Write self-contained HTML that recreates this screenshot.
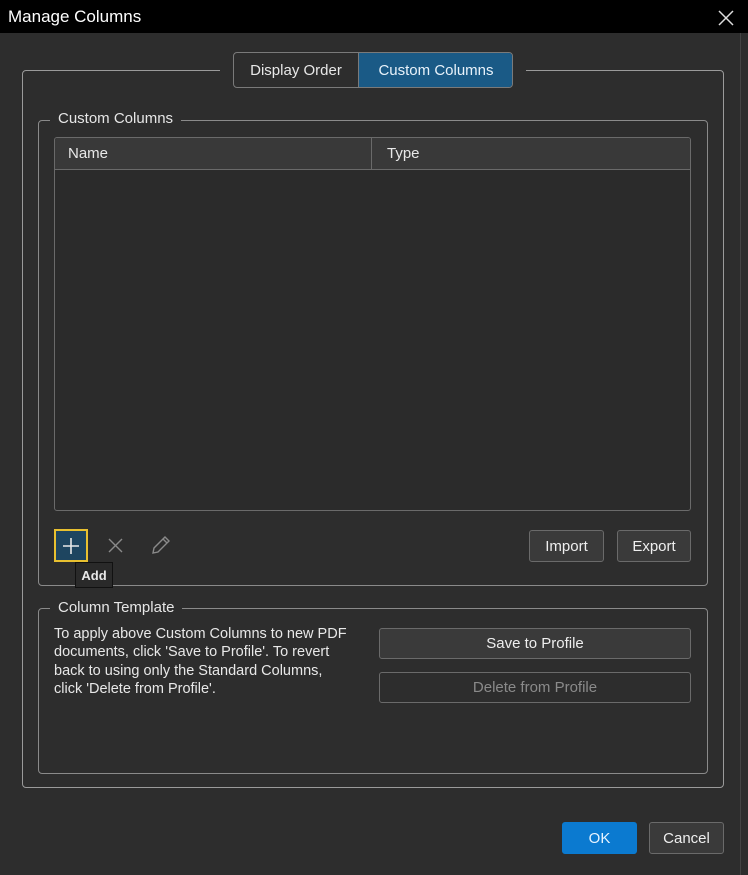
<!DOCTYPE html>
<html><head><meta charset="utf-8"><style>
*{box-sizing:border-box;margin:0;padding:0}
body{width:748px;height:875px;background:#2d2d2d;font-family:"Liberation Sans",sans-serif;color:#e8e8e8;position:relative;overflow:hidden;font-size:14px}
.a{position:absolute}
.btn{position:absolute;border:1px solid #6a6a6a;border-radius:3px;background:#3a3a3a;color:#eee;font-size:15px;display:flex;align-items:center;justify-content:center}
.grp{position:absolute;border:1px solid #8a8a8a;border-radius:4px}
.lbl{position:absolute;background:#2d2d2d;padding:0 8px;font-size:15px;color:#e6e6e6}
</style></head><body>
<div class="a" style="left:0;top:0;width:748px;height:33px;background:#000"></div>
<div class="a" style="left:8px;top:7px;font-size:17px;color:#fff">Manage Columns</div>
<svg class="a" style="left:718px;top:10px" width="16" height="16"><path d="M1 1L15 15M15 1L1 15" stroke="#ddd" stroke-width="1.5"/></svg>
<div class="a" style="left:740px;top:33px;width:1px;height:842px;background:#444"></div>

<div class="grp" style="left:22px;top:70px;width:702px;height:718px;border-color:#9a9a9a"></div>
<div class="a" style="left:220px;top:60px;width:306px;height:20px;background:#2d2d2d"></div>
<div class="a" style="left:233px;top:52px;width:280px;height:36px;border:1px solid #7a7a7a;border-radius:4px;background:#2d2d2d;overflow:hidden">
 <div class="a" style="left:0;top:0;width:125px;height:34px;display:flex;align-items:center;justify-content:center;font-size:15px;border-right:1px solid #7a7a7a">Display Order</div>
 <div class="a" style="left:125px;top:0;width:154px;height:34px;display:flex;align-items:center;justify-content:center;font-size:15px;background:#1a5a86;color:#e8f2fa">Custom Columns</div>
</div>

<div class="grp" style="left:38px;top:120px;width:670px;height:466px"></div>
<div class="lbl" style="left:50px;top:110px">Custom Columns</div>
<div class="a" style="left:54px;top:137px;width:637px;height:374px;border:1px solid #6a6a6a;border-radius:3px;background:#2b2b2b;overflow:hidden">
 <div class="a" style="left:0;top:0;width:637px;height:32px;background:#393939;border-bottom:1px solid #6a6a6a"></div>
 <div class="a" style="left:316px;top:0;width:1px;height:32px;background:#6a6a6a"></div>
 <div class="a" style="left:13px;top:7px;font-size:15px">Name</div>
 <div class="a" style="left:332px;top:7px;font-size:15px">Type</div>
</div>
<div class="a" style="left:54px;top:529px;width:34px;height:33px;border:2px solid #e8c030;background:#1e4560"></div>
<svg class="a" style="left:61px;top:536px" width="20" height="20"><path d="M10 2V18M2 10H18" stroke="#e8e8e8" stroke-width="1.6"/></svg>
<svg class="a" style="left:107px;top:537px" width="17" height="17"><path d="M2 2L15 15M15 2L2 15" stroke="#8a8a8a" stroke-width="1.4"/></svg>
<svg class="a" style="left:150px;top:535px" width="21" height="21"><path d="M3 18L4 13L15 2L19 6L8 17Z M13 4L17 8" stroke="#8a8a8a" stroke-width="1.4" fill="none"/></svg>
<div class="a" style="left:75px;top:562px;width:38px;height:26px;background:#2a2a2a;border:1px solid #111;font-size:13px;font-weight:bold;display:flex;align-items:center;justify-content:center">Add</div>
<div class="btn" style="left:529px;top:530px;width:75px;height:32px">Import</div>
<div class="btn" style="left:617px;top:530px;width:74px;height:32px">Export</div>

<div class="grp" style="left:38px;top:608px;width:670px;height:166px"></div>
<div class="lbl" style="left:50px;top:599px">Column Template</div>
<div class="a" style="left:54px;top:625px;font-size:14.5px;line-height:18.3px;color:#e8e8e8;white-space:nowrap">To apply above Custom Columns to new PDF<br>documents, click 'Save to Profile'. To revert<br>back to using only the Standard Columns,<br>click 'Delete from Profile'.</div>
<div class="btn" style="left:379px;top:628px;width:312px;height:31px">Save to Profile</div>
<div class="btn" style="left:379px;top:672px;width:312px;height:31px;background:#2d2d2d;color:#8a8a8a">Delete from Profile</div>

<div class="btn" style="left:562px;top:822px;width:75px;height:32px;background:#0b7ad0;border-color:#0b7ad0;color:#e8f4ff">OK</div>
<div class="btn" style="left:649px;top:822px;width:75px;height:32px">Cancel</div>
</body></html>
